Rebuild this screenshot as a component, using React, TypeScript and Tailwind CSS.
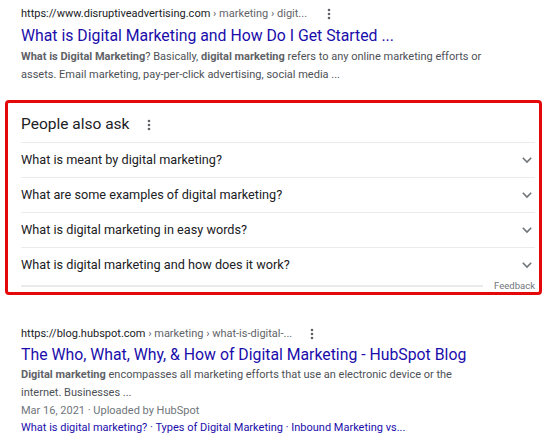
import React from "react";

const Dots = ({ className = "" }: { className?: string }) => (
  <svg width="4" height="12" viewBox="0 0 4 12" className={className}>
    <circle cx="2" cy="2" r="1.3" fill="#5f6368" />
    <circle cx="2" cy="6" r="1.3" fill="#5f6368" />
    <circle cx="2" cy="10" r="1.3" fill="#5f6368" />
  </svg>
);

const Chevron = () => (
  <svg width="12" height="8" viewBox="0 0 12 8">
    <path d="M1.8 1.8 L6 6 L10.2 1.8" fill="none" stroke="#70757a" strokeWidth="1.6" />
  </svg>
);

const questions = [
  "What is meant by digital marketing?",
  "What are some examples of digital marketing?",
  "What is digital marketing in easy words?",
  "What is digital marketing and how does it work?",
];

export default function App() {
  return (
    <div className="w-[550px] h-[444px] bg-white overflow-hidden font-['Roboto',sans-serif]">
      {/* Result 1 */}
      <div className="pl-[21px] pt-[7px]">
        <div className="flex items-center h-[14px] text-[11px] text-[#202124]">
          <span>https://www.disruptiveadvertising.com</span>
          <span className="text-[#5f6368]">&nbsp;› marketing › digit...</span>
          <Dots className="ml-[20px]" />
        </div>
        <div className="mt-[5px] h-[20px] leading-[20px] text-[15.8px] text-[#1a0dab]">
          What is Digital Marketing and How Do I Get Started ...
        </div>
        <div className="mt-[2px] text-[11px] leading-[18px] text-[#4d5156] w-[520px]">
          <b className="font-bold text-[#5f6368]">What is Digital Marketing</b>? Basically,{" "}
          <b className="font-bold text-[#5f6368]">digital marketing</b> refers to any online marketing efforts or
          <br />
          assets. Email marketing, pay-per-click advertising, social media ...
        </div>
      </div>

      {/* People also ask */}
      <div className="mt-[16px] ml-[5px] w-[537px] h-[195px] border-[3px] border-[#e4080a] rounded-[4px] pl-[13px] pr-[4px]">
        <div className="h-[39px] flex items-center pt-[5px]">
          <span className="text-[15.5px] text-[#202124]">People also ask</span>
          <Dots className="ml-[18px]" />
        </div>
        {questions.map((q) => (
          <div
            key={q}
            className="h-[35px] border-t border-[#ebebeb] flex items-center justify-between pr-[2px] text-[12.7px] text-[#202124]"
          >
            <span>{q}</span>
            <Chevron />
          </div>
        ))}
        <div className="flex items-center h-[10px] mt-[-1px]">
          <div className="w-[462px] h-[2px] bg-[#ebebeb]" />
          <span className="ml-auto text-[9.5px] text-[#70757a]">Feedback</span>
        </div>
      </div>

      {/* Result 2 */}
      <div className="pl-[21px] pt-[32px]">
        <div className="flex items-center h-[14px] text-[11px] text-[#202124]">
          <span>https://blog.hubspot.com</span>
          <span className="text-[#5f6368]">&nbsp;› marketing › what-is-digital-...</span>
          <Dots className="ml-[18px]" />
        </div>
        <div className="mt-[4px] h-[20px] leading-[20px] text-[15.8px] text-[#1a0dab]">
          The Who, What, Why, &amp; How of Digital Marketing - HubSpot Blog
        </div>
        <div className="mt-[1px] text-[11px] leading-[18px] text-[#4d5156]">
          <b className="font-bold text-[#5f6368]">Digital marketing</b> encompasses all marketing efforts that use an electronic device or the
          <br />
          internet. Businesses ...
        </div>
        <div className="text-[11px] leading-[17px] text-[#70757a]">Mar 16, 2021 · Uploaded by HubSpot</div>
        <div className="text-[11px] leading-[18px] text-[#1a0dab]">
          What is digital marketing? · Types of Digital Marketing · Inbound Marketing vs...
        </div>
      </div>
    </div>
  );
}
